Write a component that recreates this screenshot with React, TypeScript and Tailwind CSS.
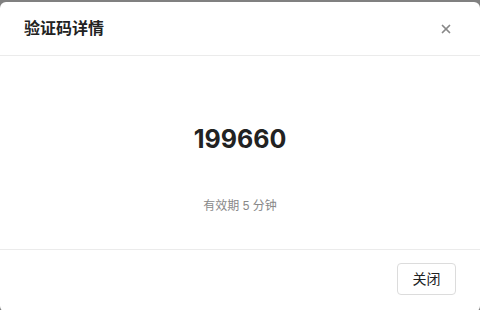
import { X } from "lucide-react";

export default function App() {
  return (
    <div className="h-[310px] w-[480px] overflow-hidden bg-[#808080] pt-[2px] font-['Liberation_Sans','Noto_Sans_CJK_SC',sans-serif]">
      <div className="flex h-[310px] w-[480px] flex-col rounded-[6px] bg-white">
        <div className="flex h-[54px] items-center justify-between border-b border-[#ebebeb] pl-6 pr-[27px]">
          <h2 className="text-[16px] font-bold text-[#222]">验证码详情</h2>
          <button type="button" className="text-[#888]">
            <X className="h-[14px] w-[14px]" strokeWidth={3} />
          </button>
        </div>
        <div className="flex h-[194px] flex-col items-center border-b border-[#ebebeb]">
          <p className="mt-[71px] font-['Inter',sans-serif] text-[25px] font-bold leading-none text-[#222]">199660</p>
          <p className="mt-[48px] text-[12px] leading-none text-[#888]">有效期 5 分钟</p>
        </div>
        <div className="flex justify-end px-6 pt-[13px]">
          <button
            type="button"
            className="h-[32px] w-[59px] rounded-[4px] border border-[#dcdcdc] text-[14px] text-[#222]"
          >
            关闭
          </button>
        </div>
      </div>
    </div>
  );
}
